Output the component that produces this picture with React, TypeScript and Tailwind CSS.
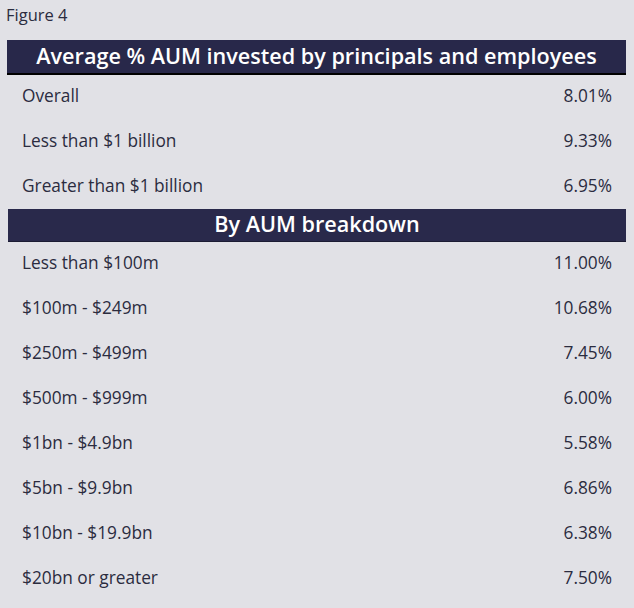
export default function App() {
  const top = [
    ["Overall", "8.01%"],
    ["Less than $1 billion", "9.33%"],
    ["Greater than $1 billion", "6.95%"],
  ];
  const aum = [
    ["Less than $100m", "11.00%"],
    ["$100m - $249m", "10.68%"],
    ["$250m - $499m", "7.45%"],
    ["$500m - $999m", "6.00%"],
    ["$1bn - $4.9bn", "5.58%"],
    ["$5bn - $9.9bn", "6.86%"],
    ["$10bn - $19.9bn", "6.38%"],
    ["$20bn or greater", "7.50%"],
  ];
  const Row = ({ l, r }: { l: string; r: string }) => (
    <div className="flex h-[45px] items-center justify-between pl-[22px] pr-[22px] pb-[4px] text-[17.3px] font-medium text-[#2b2c3f]">
      <span>{l}</span>
      <span>{r}</span>
    </div>
  );
  return (
    <div
      className="w-[634px] h-[608px] overflow-hidden bg-[#e1e1e6]"
      style={{ fontFamily: '"Open Sans", sans-serif' }}
    >
      <div className="h-[40px] pl-[6px] pt-[3px] text-[16.5px] font-medium text-[#2b2c3f]">Figure 4</div>
      <div className="ml-[7px] mr-[8px] h-[35px] pb-[2px] bg-[#28284a] border-b-2 border-black flex items-center justify-center text-white text-[21.6px] font-semibold leading-none">
        Average % AUM invested by principals and employees
      </div>
      {top.map(([l, r]) => (
        <Row key={l} l={l} r={r} />
      ))}
      <div className="-mt-[1px] ml-[8px] mr-[8px] h-[33px] pb-[2px] bg-[#29294b] border-b border-[#1b1b33] flex items-center justify-center text-white text-[21.6px] font-semibold leading-none">
        By AUM breakdown
      </div>
      {aum.map(([l, r]) => (
        <Row key={l} l={l} r={r} />
      ))}
    </div>
  );
}
